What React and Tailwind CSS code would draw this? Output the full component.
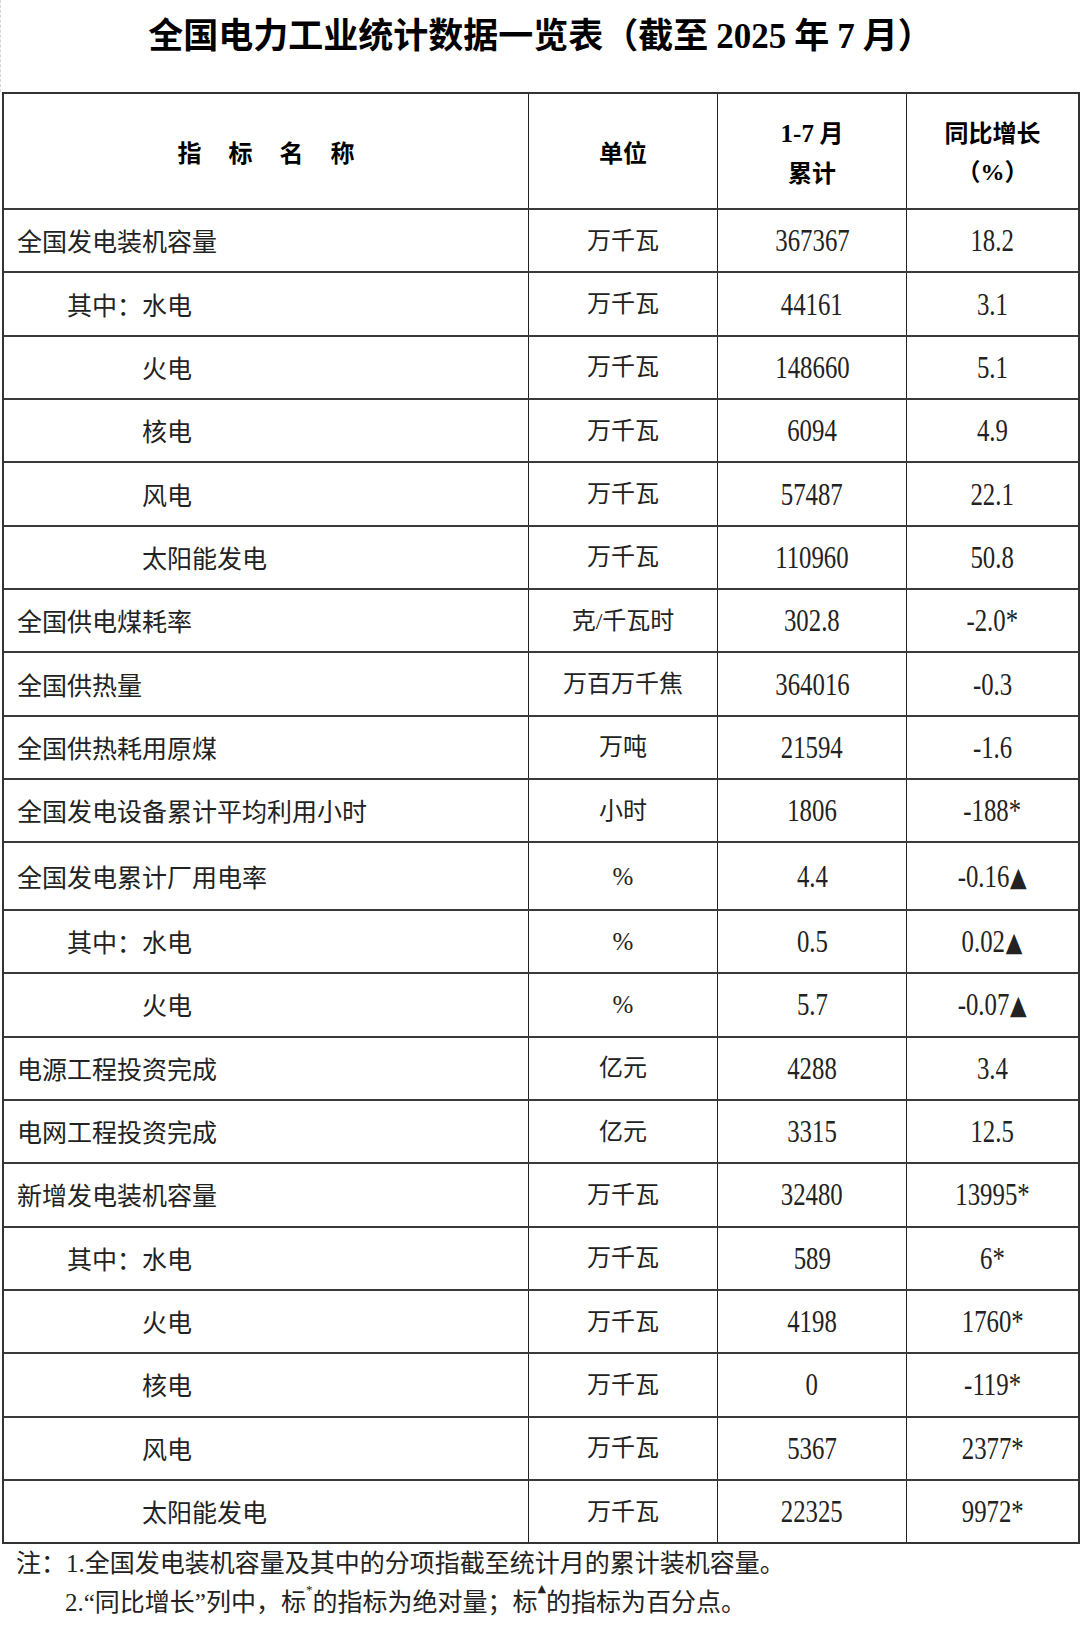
import React from "react";

const rows = [
  [0, "全国发电装机容量", "万千瓦", "367367", "18.2"],
  [1, "其中：水电", "万千瓦", "44161", "3.1"],
  [2, "火电", "万千瓦", "148660", "5.1"],
  [2, "核电", "万千瓦", "6094", "4.9"],
  [2, "风电", "万千瓦", "57487", "22.1"],
  [2, "太阳能发电", "万千瓦", "110960", "50.8"],
  [0, "全国供电煤耗率", "克/千瓦时", "302.8", "-2.0*"],
  [0, "全国供热量", "万百万千焦", "364016", "-0.3"],
  [0, "全国供热耗用原煤", "万吨", "21594", "-1.6"],
  [0, "全国发电设备累计平均利用小时", "小时", "1806", "-188*"],
  [0, "全国发电累计厂用电率", "%", "4.4", "-0.16", true],
  [1, "其中：水电", "%", "0.5", "0.02", true],
  [2, "火电", "%", "5.7", "-0.07", true],
  [0, "电源工程投资完成", "亿元", "4288", "3.4"],
  [0, "电网工程投资完成", "亿元", "3315", "12.5"],
  [0, "新增发电装机容量", "万千瓦", "32480", "13995*"],
  [1, "其中：水电", "万千瓦", "589", "6*"],
  [2, "火电", "万千瓦", "4198", "1760*"],
  [2, "核电", "万千瓦", "0", "-119*"],
  [2, "风电", "万千瓦", "5367", "2377*"],
  [2, "太阳能发电", "万千瓦", "22325", "9972*"],
];

const sans = "font-['Noto_Sans_CJK_SC',sans-serif]";
const serif = "font-['Liberation_Serif','Noto_Sans_CJK_SC',serif]";

function Num({ value, tri }) {
  return (
    <span className={`inline-block scale-x-[0.8] text-[31px] leading-none text-[#222] ${serif}`}>
      {value}
      {tri && (
        <span className="relative -top-[1px] ml-[1px] font-['DejaVu_Sans',sans-serif] text-[27px]">▲</span>
      )}
    </span>
  );
}

export default function App() {
  return (
    <div className={`w-[1080px] bg-white text-[#1c1c1c] ${sans}`}>
      <div className="h-[92px] border-l border-dashed border-gray-300 pt-[12px]">
        <h1 className="text-center text-[35px] font-bold leading-[42px] text-black">
          全国电力工业统计数据一览表（截至 <span className={`${serif} font-bold`}>2025</span> 年{" "}
          <span className={`${serif} font-bold`}>7</span> 月）
        </h1>
      </div>

      <div className="ml-[2px] w-[1078px] border-2 border-[#333]">
        {/* header */}
        <div className="grid h-[114px] grid-cols-[524px_189px_189px_1fr] font-bold text-black">
          <div className="flex items-center justify-center gap-[27px] pt-[2px] text-[24px]">
            <span>指</span>
            <span>标</span>
            <span>名</span>
            <span>称</span>
          </div>
          <div className="flex items-center justify-center border-l border-[#222] pt-[2px] text-[24px]">
            单位
          </div>
          <div className="flex flex-col items-center justify-center border-l border-[#222] pt-[2px] text-[24px] leading-[38px]">
            <span>
              <span className={`${serif} text-[25px]`}>1-7</span> 月
            </span>
            <span>累计</span>
          </div>
          <div className="flex flex-col items-center justify-center border-l border-[#222] pt-[2px] text-[24px] leading-[38px]">
            <span>同比增长</span>
            <span>
              （<span className={`${serif}`}>%</span>）
            </span>
          </div>
        </div>

        {rows.map(([lvl, name, unit, val, yoy, tri], i) => (
          <div
            key={i}
            className={`grid grid-cols-[524px_189px_189px_1fr] border-t-2 border-[#3a3a3a] ${
              i === 10 ? "h-[67.4px]" : "h-[63.35px]"
            }`}
          >
            <div
              className={`flex items-center text-[25px] leading-none text-[#222] ${
                lvl === 0 ? "pl-[13px]" : lvl === 1 ? "pl-[63px]" : "pl-[138px]"
              }`}
            >
              {name}
            </div>
            <div className={`flex items-center justify-center border-l border-[#222] text-[24px] leading-none text-[#222] ${serif}`}>
              {unit === "%" ? <span className="text-[25px]">%</span> : unit}
            </div>
            <div className="flex items-center justify-center border-l border-[#222]">
              <Num value={val} />
            </div>
            <div className="flex items-center justify-center border-l border-[#222]">
              <Num value={yoy} tri={tri} />
            </div>
          </div>
        ))}
      </div>

      <div className={`pl-[16px] text-[25px] leading-[39px] text-[#222] ${serif}`}>
        <div>注：1.全国发电装机容量及其中的分项指截至统计月的累计装机容量。</div>
        <div className="pl-[49px]">
          2.“同比增长”列中，标<span className="align-top text-[13px] leading-none">*</span>的指标为绝对量；标
          <span className="align-top font-['DejaVu_Sans',sans-serif] text-[11px] leading-none">▲</span>
          的指标为百分点。
        </div>
      </div>
    </div>
  );
}
